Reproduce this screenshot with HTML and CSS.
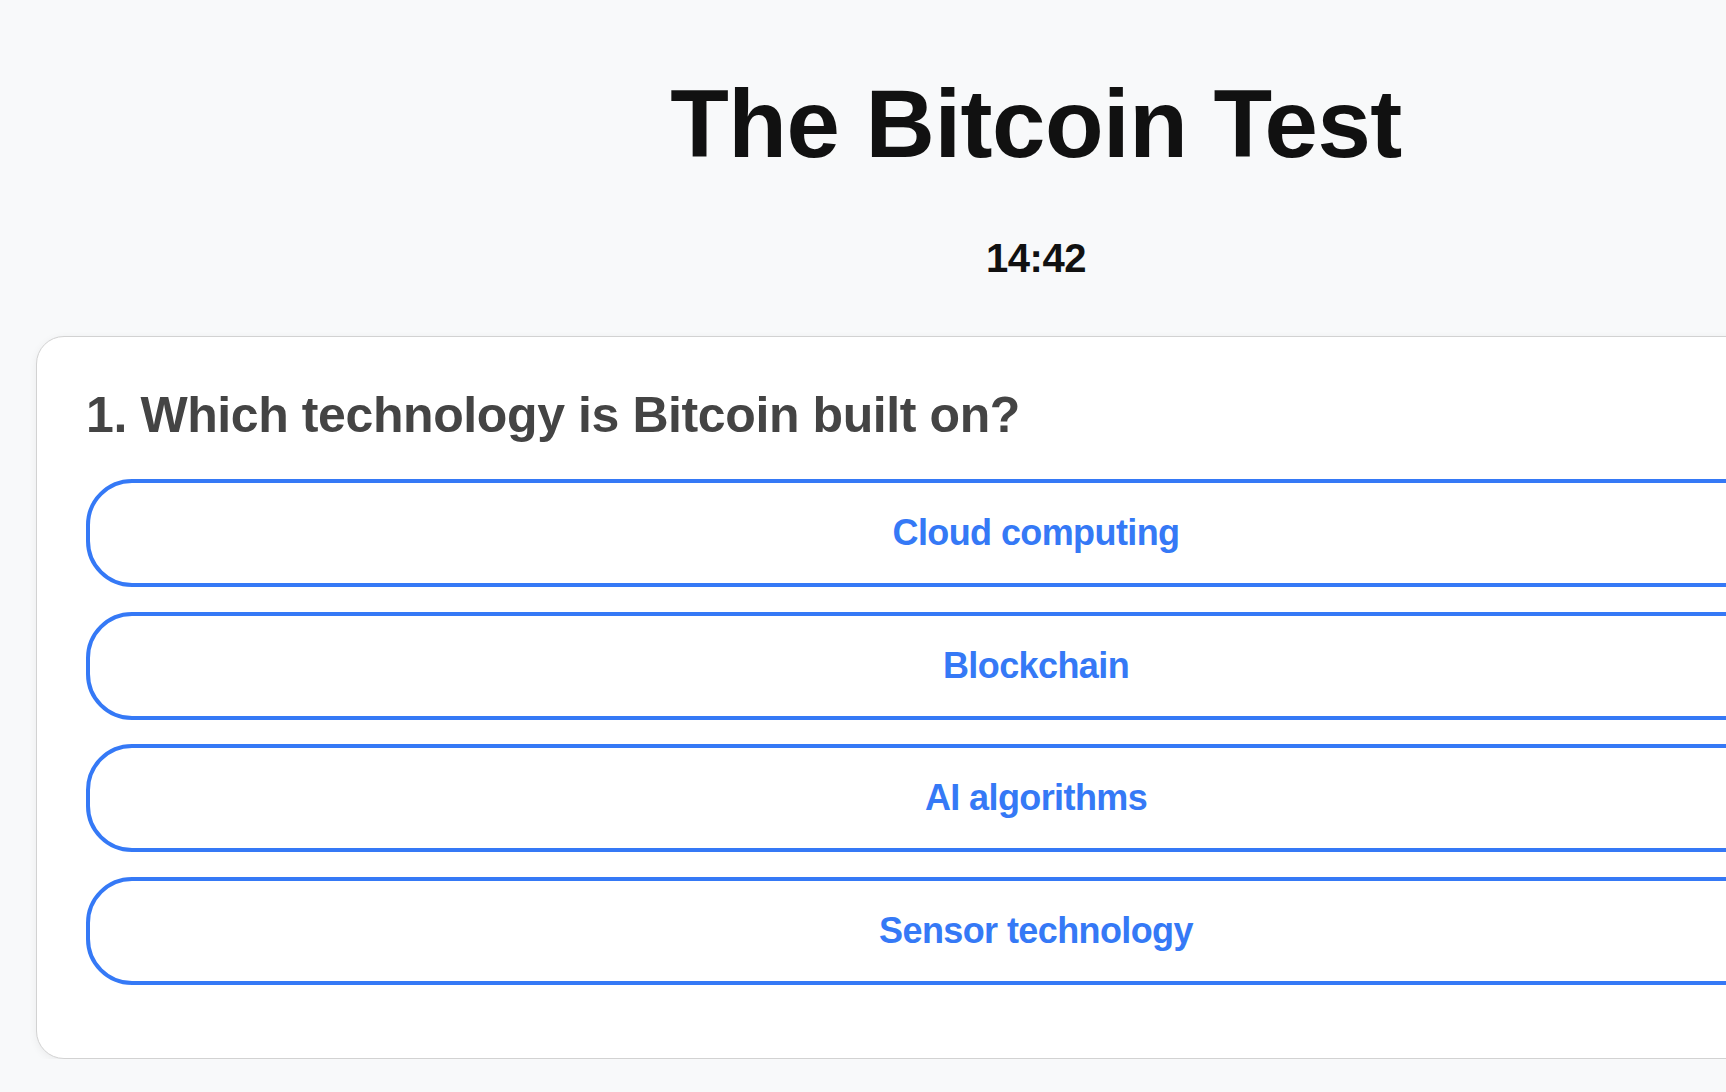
FILE: index.html
```html
<!DOCTYPE html>
<html lang="en">
<head>
<meta charset="utf-8">
<title>The Bitcoin Test</title>
<link rel="stylesheet" href="styles.css">
</head>
<body>
<main class="quiz">
  <h1 class="quiz-title">The Bitcoin Test</h1>
  <div class="timer">14:42</div>
  <section class="card">
    <h2 class="question">1. Which technology is Bitcoin built on?</h2>
    <div class="options">
      <button class="option">Cloud computing</button>
      <button class="option">Blockchain</button>
      <button class="option">AI algorithms</button>
      <button class="option">Sensor technology</button>
    </div>
  </section>
</main>
</body>
</html>
```

FILE: styles.css
```css
html {
  overflow: hidden;
}
body {
  margin: 0;
  padding: 0 36px;
  background: #f8f9fa;
  font-family: "Liberation Sans", Arial, Helvetica, sans-serif;
  color: #111;
}
.quiz {
  width: 2000px;
  padding-top: 69px;
}
.quiz-title {
  margin: 0;
  text-align: center;
  font-size: 96px;
  line-height: 110px;
  font-weight: 700;
  letter-spacing: -0.5px;
  color: #111;
}
.timer {
  margin-top: 56px;
  text-align: center;
  font-size: 40px;
  line-height: 46px;
  font-weight: 700;
  letter-spacing: -0.5px;
  color: #111;
}
.card {
  margin-top: 55px;
  background: #fff;
  border: 1px solid #d2d2d2;
  border-radius: 28px;
  box-shadow: 0 2px 8px rgba(0, 0, 0, 0.06);
  padding: 50px 49px 73px;
}
.question {
  margin: 0 0 35px;
  font-size: 50px;
  line-height: 57px;
  font-weight: 700;
  letter-spacing: -0.4px;
  color: #444;
}
.options {
  display: flex;
  flex-direction: column;
  gap: 24.5px;
}
.option {
  display: block;
  width: 100%;
  height: 108px;
  box-sizing: border-box;
  background: #fff;
  border: 4px solid #3579f6;
  border-radius: 46px;
  font-family: "Liberation Sans", Arial, Helvetica, sans-serif;
  font-size: 36px;
  font-weight: 700;
  letter-spacing: -0.6px;
  color: #3579f6;
  text-align: center;
  cursor: pointer;
  padding: 0;
}
```
